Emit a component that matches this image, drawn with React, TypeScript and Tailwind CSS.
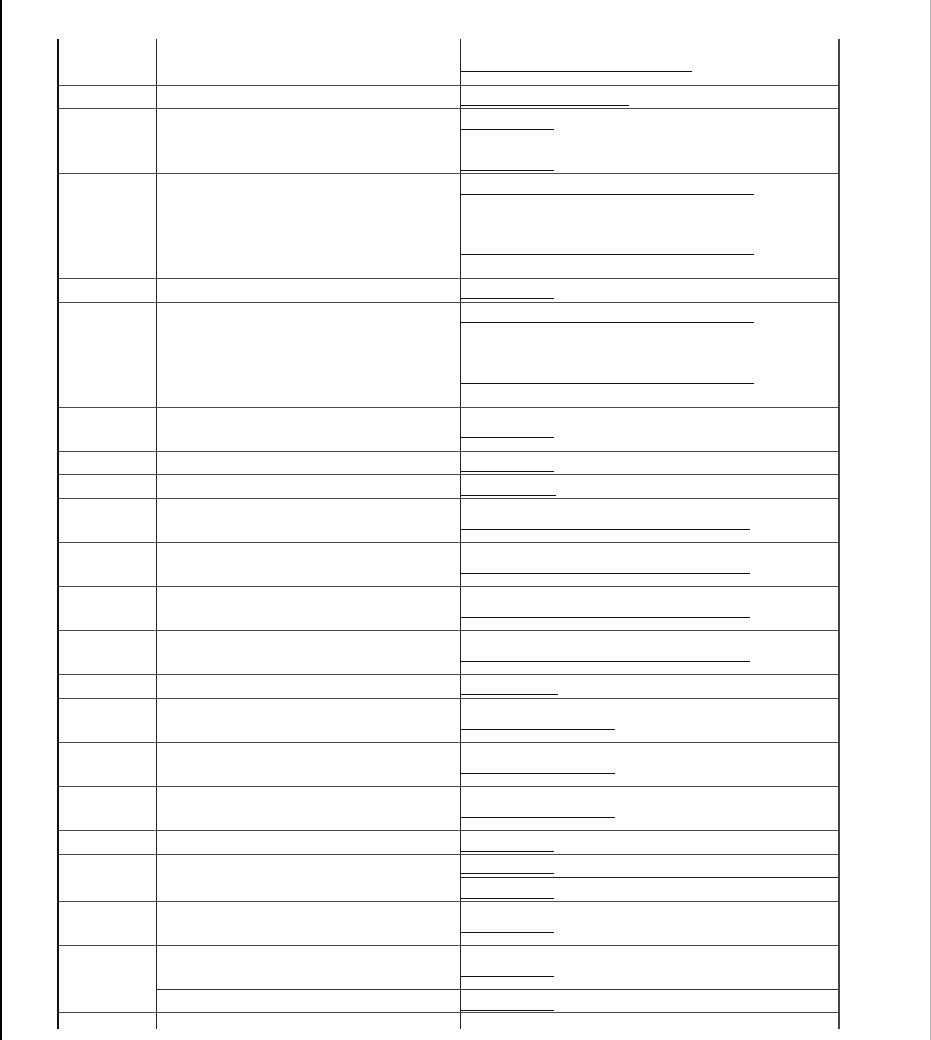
import React from "react";

type Line = { top: number; w: number };
type Sub = { h: number; lines: Line[]; border?: boolean };
type Row = { h: number; subs: Sub[]; split?: "col3" | "col23"; last?: boolean };

const W93 = 93;
const rows: Row[] = [
  { h: 47, subs: [{ h: 47, lines: [{ top: 32, w: 231 }] }] },
  { h: 23, subs: [{ h: 23, lines: [{ top: 19, w: 168 }] }] },
  { h: 65, subs: [{ h: 65, lines: [{ top: 20, w: W93 }, { top: 61, w: W93 }] }] },
  { h: 105, subs: [{ h: 105, lines: [{ top: 20, w: 293 }, { top: 80, w: 293 }] }] },
  { h: 24, subs: [{ h: 24, lines: [{ top: 19, w: W93 }] }] },
  { h: 105, subs: [{ h: 105, lines: [{ top: 19, w: 293 }, { top: 80, w: 293 }] }] },
  { h: 44, subs: [{ h: 44, lines: [{ top: 29, w: W93 }] }] },
  { h: 23, subs: [{ h: 23, lines: [{ top: 19, w: W93 }] }] },
  { h: 24, subs: [{ h: 24, lines: [{ top: 20, w: 95 }] }] },
  { h: 44, subs: [{ h: 44, lines: [{ top: 30, w: 289 }] }] },
  { h: 44, subs: [{ h: 44, lines: [{ top: 30, w: 289 }] }] },
  { h: 44, subs: [{ h: 44, lines: [{ top: 30, w: 289 }] }] },
  { h: 44, subs: [{ h: 44, lines: [{ top: 30, w: 289 }] }] },
  { h: 24, subs: [{ h: 24, lines: [{ top: 19, w: 97 }] }] },
  { h: 44, subs: [{ h: 44, lines: [{ top: 30, w: 154 }] }] },
  { h: 44, subs: [{ h: 44, lines: [{ top: 30, w: 154 }] }] },
  { h: 44, subs: [{ h: 44, lines: [{ top: 30, w: 154 }] }] },
  { h: 24, subs: [{ h: 24, lines: [{ top: 20, w: W93 }] }] },
  {
    h: 47,
    split: "col3",
    subs: [
      { h: 23, lines: [{ top: 18, w: W93 }], border: true },
      { h: 24, lines: [{ top: 20, w: W93 }] },
    ],
  },
  { h: 44, subs: [{ h: 44, lines: [{ top: 30, w: W93 }] }] },
  {
    h: 67,
    split: "col23",
    subs: [
      { h: 44, lines: [{ top: 30, w: W93 }], border: true },
      { h: 23, lines: [{ top: 20, w: W93 }] },
    ],
  },
  { h: 16, subs: [{ h: 16, lines: [] }], last: true },
];

function Underlines({ lines, h }: { lines: Line[]; h: number }) {
  return (
    <div className="relative w-full" style={{ height: h }}>
      {lines.map((l, i) => (
        <a
          key={i}
          href="#"
          className="absolute left-0 h-px bg-[#111]"
          style={{ top: l.top, width: l.w }}
        />
      ))}
    </div>
  );
}

export default function App() {
  return (
    <div
      className="h-[1040px] w-[931px] overflow-hidden border-l-2 border-r border-l-black border-r-[#b4b4b4] bg-white"
      style={{ fontFamily: '"Liberation Sans", Arial, sans-serif' }}
    >
      <div className="ml-[55px] mt-[39px] flex w-[783px] flex-col border-l-2 border-r-2 border-l-[#111] border-r-[#444]">
        {rows.map((r, i) => {
          const rowBorder = r.last ? "" : "border-b border-b-[#4a4a4a]";
          if (r.split === "col23") {
            return (
              <div key={i} className={`box-border flex ${rowBorder}`} style={{ height: r.h }}>
                <div className="w-[98px] shrink-0 border-r border-r-[#222]" />
                <div className="flex flex-1 flex-col">
                  {r.subs.map((s, j) => (
                    <div
                      key={j}
                      className={`box-border flex ${s.border ? "border-b border-b-[#333]" : ""}`}
                      style={{ height: s.border ? s.h : s.h - 1 }}
                    >
                      <div className="w-[304px] shrink-0 border-r border-r-[#222]" />
                      <div className="flex-1">
                        <Underlines lines={s.lines} h={s.h - 1} />
                      </div>
                    </div>
                  ))}
                </div>
              </div>
            );
          }
          if (r.split === "col3") {
            return (
              <div key={i} className={`box-border flex ${rowBorder}`} style={{ height: r.h }}>
                <div className="w-[98px] shrink-0 border-r border-r-[#222]" />
                <div className="w-[304px] shrink-0 border-r border-r-[#222]" />
                <div className="flex flex-1 flex-col">
                  {r.subs.map((s, j) => (
                    <div
                      key={j}
                      className={`box-border ${s.border ? "border-b border-b-[#222]" : ""}`}
                      style={{ height: s.border ? s.h : s.h - 1 }}
                    >
                      <Underlines lines={s.lines} h={s.h - 1} />
                    </div>
                  ))}
                </div>
              </div>
            );
          }
          const s = r.subs[0];
          return (
            <div key={i} className={`box-border flex ${rowBorder}`} style={{ height: r.h }}>
              <div className="w-[98px] shrink-0 border-r border-r-[#222]" />
              <div className="w-[304px] shrink-0 border-r border-r-[#222]" />
              <div className="flex-1">
                <Underlines lines={s.lines} h={r.last ? r.h : r.h - 1} />
              </div>
            </div>
          );
        })}
      </div>
    </div>
  );
}
